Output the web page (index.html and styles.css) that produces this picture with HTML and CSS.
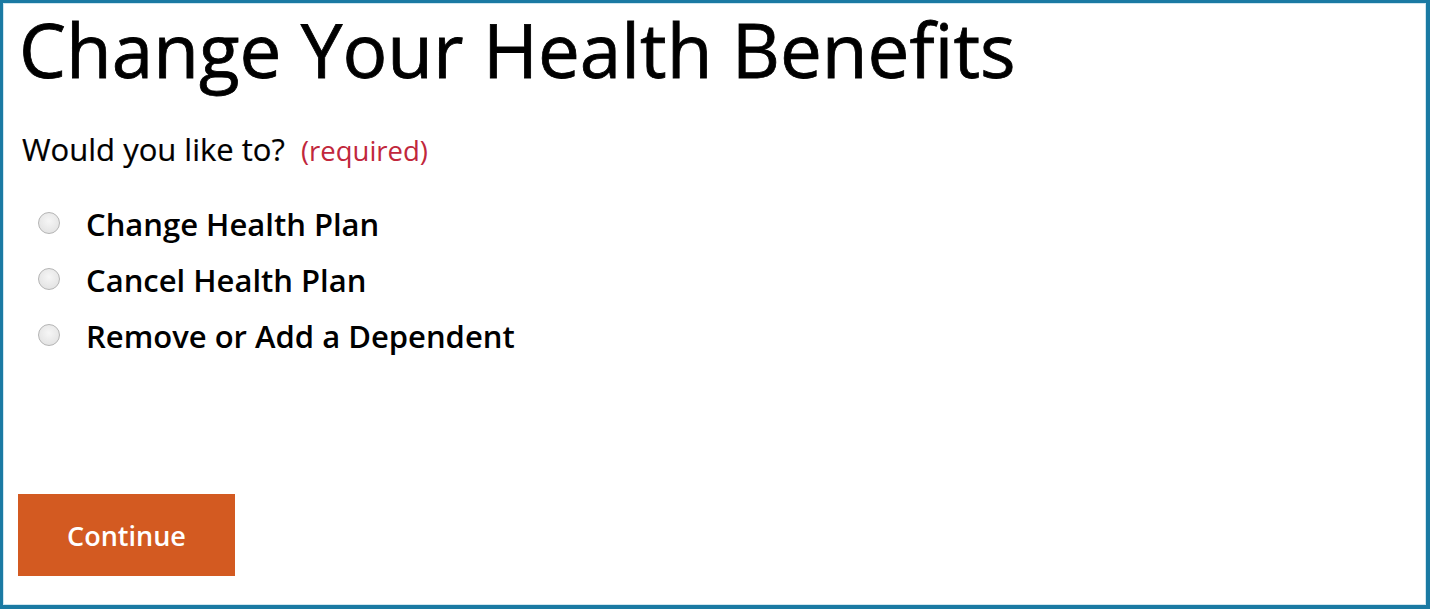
FILE: index.html
```html
<!DOCTYPE html>
<html lang="en">
<head>
<meta charset="utf-8">
<title>Change Your Health Benefits</title>
<link rel="stylesheet" href="styles.css">
</head>
<body>
<div class="frame">
  <h1 class="title">Change Your Health Benefits</h1>
  <fieldset class="question">
    <legend class="prompt">Would you like to? <span class="required">(required)</span></legend>
    <label class="option"><span class="radio"></span><span class="option-text">Change Health Plan</span></label>
    <label class="option"><span class="radio"></span><span class="option-text">Cancel Health Plan</span></label>
    <label class="option"><span class="radio"></span><span class="option-text">Remove or Add a Dependent</span></label>
  </fieldset>
  <button class="continue" type="button">Continue</button>
</div>
</body>
</html>
```
FILE: styles.css
```css
* { box-sizing: border-box; }
html, body { margin: 0; padding: 0; background: #1a7aa3; }
body { width: 1430px; height: 609px; padding: 3px 4px 4px 3px; }
.frame {
  height: 100%;
  background: #fff;
  box-shadow: inset 0 0 0 1px #cfe6f0;
  padding: 6px 15px 0 16px;
  font-family: "Open Sans", "Liberation Sans", sans-serif;
  color: #000;
  display: flex;
  flex-direction: column;
  align-items: flex-start;
}
.title {
  margin: 0;
  font-size: 74.6px;
  font-weight: 400;
  line-height: 80px;
  letter-spacing: 0;
  -webkit-text-stroke: 0.8px #000;
}
.question { border: 0; margin: 0; padding: 0; display: flex; flex-direction: column; }
.prompt { padding: 0; margin: 43px 0 0 3px; font-size: 31px; line-height: 34px; float: left; -webkit-text-stroke: 0.2px #000; }
.required { color: #c1273c; margin-left: 8px; font-size: 27.5px; -webkit-text-stroke: 0; }
.option {
  display: flex; align-items: center; gap: 26px;
  margin-left: 19px; height: 56px;
}
.question .option:first-of-type { margin-top: 28px; }
.radio {
  width: 22px; height: 22px; border-radius: 50%;
  border: 1px solid #b5b5b5;
  background: radial-gradient(circle at 50% 40%, #f6f6f6 0%, #dedede 100%);
  flex: none;
  position: relative; top: -1px;
}
.option-text { font-size: 31px; font-weight: 600; line-height: 36px; }
.continue {
  margin-top: 130px;
  margin-left: -1px;
  width: 217px; height: 82px;
  background: #d35a21;
  color: #fff; border: 0;
  font-family: "Open Sans", "Liberation Sans", sans-serif;
  font-size: 27px; font-weight: 600;
}
```
